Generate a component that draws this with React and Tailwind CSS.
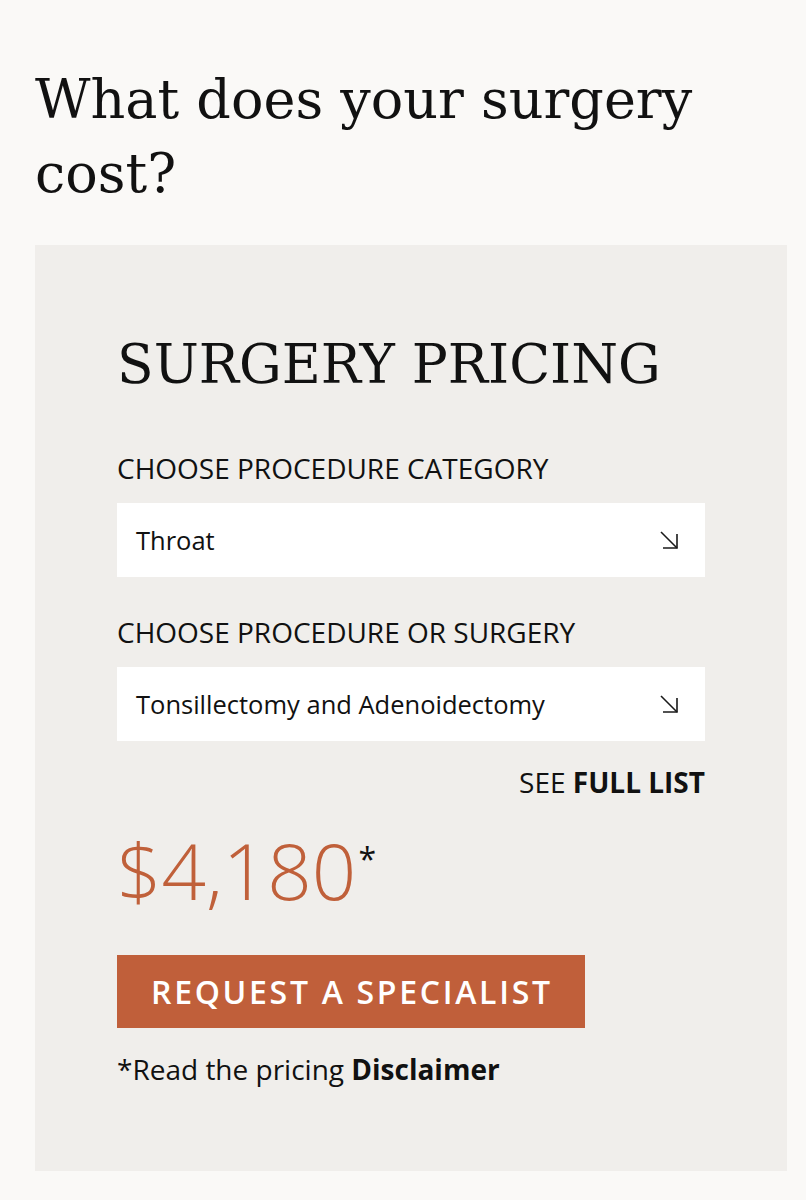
import React from 'react';

const serif = { fontFamily: '"DejaVu Serif", "Liberation Serif", serif' };

const ArrowIcon = () => (
  <svg width="20" height="20" viewBox="0 0 20 20" fill="none" stroke="#1a1a1a" strokeWidth="1.6">
    <path d="M2 2 L18 18" />
    <path d="M4 18 H18 V4" />
  </svg>
);

const SelectBox = ({ value }) => (
  <div className="flex h-[74px] items-center justify-between bg-white pl-[19px] pr-[26px]">
    <span className="text-[25.5px] text-[#111]">{value}</span>
    <ArrowIcon />
  </div>
);

export default function App() {
  return (
    <div
      className="min-h-[1200px] bg-[#faf9f7] pl-[35px] pr-[19px] pt-[63px]"
      style={{ fontFamily: '"Open Sans", "Liberation Sans", sans-serif' }}
    >
      {/* Page heading */}
      <h1 className="text-[54px] font-light leading-[74px] text-[#111]" style={serif}>
        What does your surgery cost?
      </h1>

      {/* Pricing card */}
      <div className="mt-[34px] h-[926px] bg-[#f0eeeb] px-[82px] pt-[88px]">
        <h2 className="text-[53.5px] leading-[64px] text-[#111]" style={serif}>
          SURGERY PRICING
        </h2>

        <div className="mt-[52px] text-[28px] leading-[38px] text-[#111]">CHOOSE PROCEDURE CATEGORY</div>
        <div className="mt-[16px]">
          <SelectBox value="Throat" />
        </div>

        <div className="mt-[36px] text-[28px] leading-[38px] text-[#111]">CHOOSE PROCEDURE OR SURGERY</div>
        <div className="mt-[16px]">
          <SelectBox value="Tonsillectomy and Adenoidectomy" />
        </div>

        <div className="mt-[22px] text-right text-[28px] leading-[38px] text-[#111]">
          SEE <span className="font-bold">FULL LIST</span>
        </div>

        <div className="mt-[22px] flex items-start">
          <span className="text-[78px] font-light leading-[94px] text-[#c0603a]">$4,180</span>
          <span className="ml-[2px] mt-[20px] text-[32px] leading-[32px] text-[#111]">*</span>
        </div>

        <button className="mt-[38px] h-[73px] bg-[#c05f3a] pl-[34px] pr-[32px] text-[32px] font-semibold tracking-[2.7px] text-white">
          REQUEST A SPECIALIST
        </button>

        <p className="mt-[22px] text-[28px] leading-[38px] text-[#111]">
          *Read the pricing <span className="font-bold">Disclaimer</span>
        </p>
      </div>
    </div>
  );
}
